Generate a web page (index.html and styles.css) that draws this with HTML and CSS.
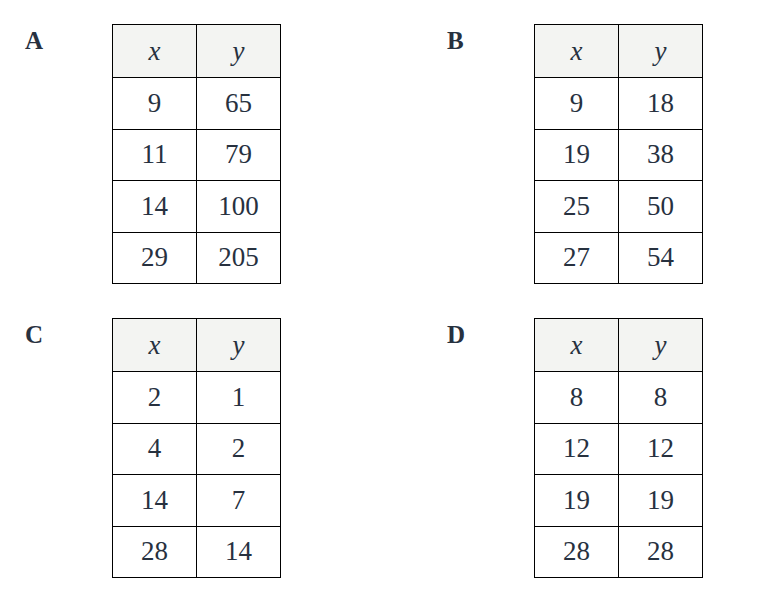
FILE: index.html
```html
<!DOCTYPE html>
<html>
<head>
<meta charset="utf-8">
<link rel="stylesheet" href="styles.css">
</head>
<body>
<div class="grid">
  <div class="option">
    <div class="label">A</div>
    <table class="tbl">
      <tr><th><i>x</i></th><th><i>y</i></th></tr>
      <tr><td>9</td><td>65</td></tr>
      <tr><td>11</td><td>79</td></tr>
      <tr><td>14</td><td>100</td></tr>
      <tr><td>29</td><td>205</td></tr>
    </table>
  </div>
  <div class="option">
    <div class="label">B</div>
    <table class="tbl">
      <tr><th><i>x</i></th><th><i>y</i></th></tr>
      <tr><td>9</td><td>18</td></tr>
      <tr><td>19</td><td>38</td></tr>
      <tr><td>25</td><td>50</td></tr>
      <tr><td>27</td><td>54</td></tr>
    </table>
  </div>
  <div class="option">
    <div class="label">C</div>
    <table class="tbl">
      <tr><th><i>x</i></th><th><i>y</i></th></tr>
      <tr><td>2</td><td>1</td></tr>
      <tr><td>4</td><td>2</td></tr>
      <tr><td>14</td><td>7</td></tr>
      <tr><td>28</td><td>14</td></tr>
    </table>
  </div>
  <div class="option">
    <div class="label">D</div>
    <table class="tbl">
      <tr><th><i>x</i></th><th><i>y</i></th></tr>
      <tr><td>8</td><td>8</td></tr>
      <tr><td>12</td><td>12</td></tr>
      <tr><td>19</td><td>19</td></tr>
      <tr><td>28</td><td>28</td></tr>
    </table>
  </div>
</div>
</body>
</html>
```
FILE: styles.css
```css
html, body {
  margin: 0;
  padding: 0;
  background: #ffffff;
}
body {
  font-family: "Liberation Serif", "Times New Roman", serif;
  color: #27313f;
}
.grid {
  display: grid;
  grid-template-columns: 422px 1fr;
  row-gap: 34px;
  padding: 24px 0 0 24px;
}
.option {
  display: flex;
  align-items: flex-start;
}
.label {
  width: 88px;
  font-weight: bold;
  font-size: 25px;
  line-height: 25px;
  margin-top: 4px;
  padding-left: 1px;
  box-sizing: border-box;
}
.tbl {
  border-collapse: collapse;
  border: 1px solid #000;
}
.tbl th, .tbl td {
  border: 1px solid #000;
  padding: 0;
  text-align: center;
  vertical-align: middle;
  font-size: 27px;
  font-weight: normal;
  width: 83px;
}
.tbl th {
  background: #f3f4f2;
  height: 52px;
}
.tbl td {
  height: 50.5px;
}
.tbl i {
  font-style: italic;
}
```
